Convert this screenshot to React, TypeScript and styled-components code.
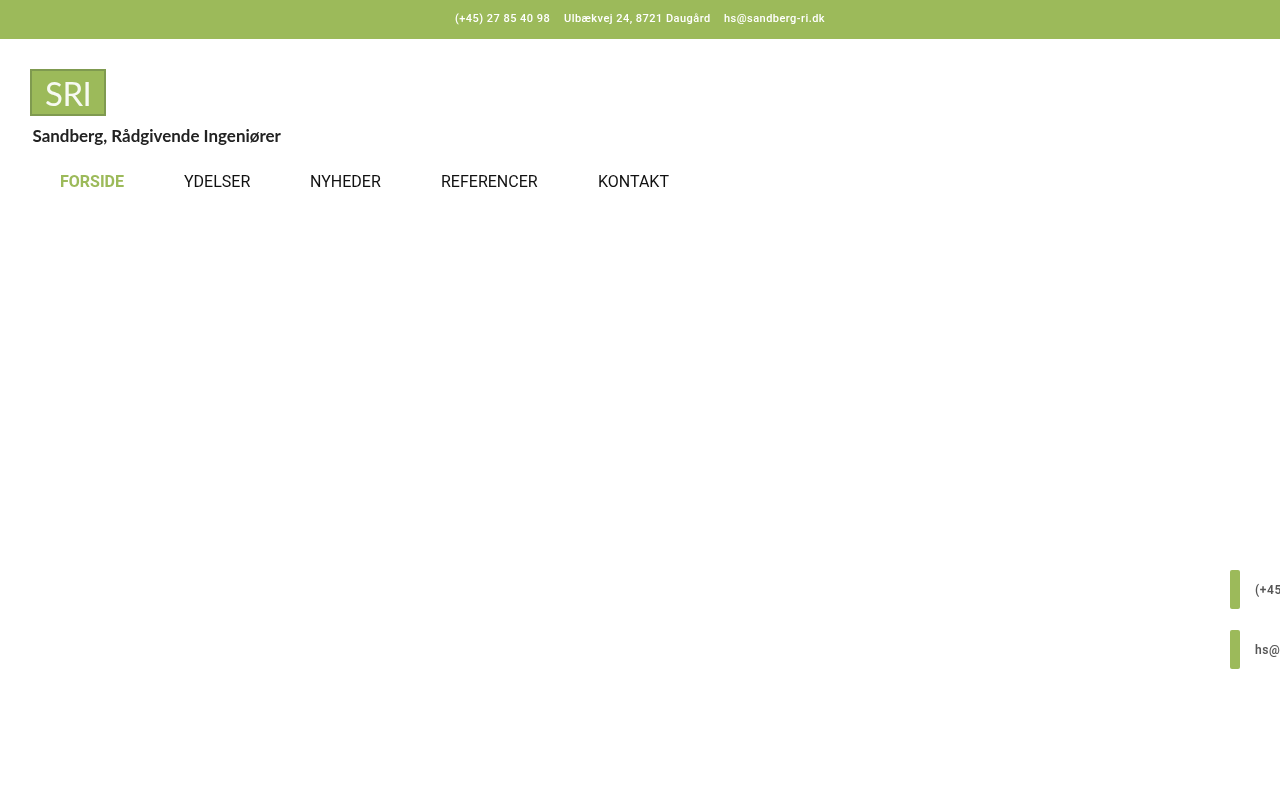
import React from "react";
import styled, { createGlobalStyle } from "styled-components";

const Global = createGlobalStyle`
  html, body { margin: 0; padding: 0; background: #fff; overflow: hidden; }
  body { font-family: Roboto, "Liberation Sans", sans-serif; }
  * { box-sizing: border-box; }
`;

const Page = styled.div`
  position: relative;
  width: 1280px;
  height: 800px;
  overflow: hidden;
  background: #fff;
`;

const TopBar = styled.div`
  height: 39px;
  background: #9cba5a;
  display: flex;
  justify-content: center;
  align-items: center;
  gap: 13.5px;
  padding-bottom: 2px;
`;

const TopItem = styled.a`
  color: #fff;
  font-size: 11px;
  font-weight: 500;
  letter-spacing: 0.47px;
  line-height: 16px;
  white-space: nowrap;
  will-change: transform;
`;

const Header = styled.header`
  padding: 30px 30px 0;
`;

const Logo = styled.div`
  width: 251px;
  height: 76px;
  display: flex;
  flex-direction: column;
  align-items: flex-start;
`;

const LogoMark = styled.div`
  width: 76px;
  height: 47px;
  background: #9cba5a;
  border: 2px solid #7f9a50;
  color: rgba(255, 255, 255, 0.92);
  font-family: Lato, "Open Sans", sans-serif;
  font-size: 33px;
  font-weight: 400;
  line-height: 44px;
  padding-left: 13px;
  letter-spacing: -0.5px;
  filter: blur(0.6px);
`;

const LogoName = styled.div`
  margin: 10px 0 0 2.5px;
  color: #222;
  font-family: Lato, "Open Sans", sans-serif;
  font-size: 16.95px;
  font-weight: 700;
  line-height: 20px;
  white-space: nowrap;
  filter: blur(0.6px);
`;

const Nav = styled.nav`
  display: flex;
  margin-top: 25px;
  padding-left: 30px;
  gap: 60px;
`;

const NavLink = styled.a<{ $active?: boolean }>`
  color: ${(p) => (p.$active ? "#9cba5a" : "#111")};
  font-size: 16px;
  font-weight: ${(p) => (p.$active ? 700 : 400)};
  line-height: 24px;
  white-space: nowrap;
  will-change: transform;
`;

const SideTab = styled.div<{ $top: number; $left: number }>`
  position: absolute;
  top: ${(p) => p.$top}px;
  left: ${(p) => p.$left}px;
  display: flex;
  align-items: center;
  gap: 15px;
  height: 39px;
`;

const SideBar = styled.span`
  display: block;
  width: 10px;
  height: 39px;
  border-radius: 2px;
  background: #9cba5a;
`;

const SideText = styled.span`
  color: #555;
  font-size: 12px;
  font-weight: 600;
  letter-spacing: 0.6px;
  white-space: nowrap;
  will-change: transform;
`;

export default function App() {
  return (
    <Page>
      <Global />
      <TopBar>
        <TopItem>(+45) 27 85 40 98</TopItem>
        <TopItem>Ulbækvej 24, 8721 Daugård</TopItem>
        <TopItem>hs@sandberg-ri.dk</TopItem>
      </TopBar>
      <Header>
        <Logo>
          <LogoMark>SRI</LogoMark>
          <LogoName>Sandberg, Rådgivende Ingeniører</LogoName>
        </Logo>
        <Nav>
          <NavLink $active>FORSIDE</NavLink>
          <NavLink>YDELSER</NavLink>
          <NavLink>NYHEDER</NavLink>
          <NavLink>REFERENCER</NavLink>
          <NavLink>KONTAKT</NavLink>
        </Nav>
      </Header>
      <SideTab $top={570} $left={1230.4}>
        <SideBar />
        <SideText>(+45) 27 85 40 98</SideText>
      </SideTab>
      <SideTab $top={630} $left={1230}>
        <SideBar />
        <SideText>hs@sandberg-ri.dk</SideText>
      </SideTab>
    </Page>
  );
}
